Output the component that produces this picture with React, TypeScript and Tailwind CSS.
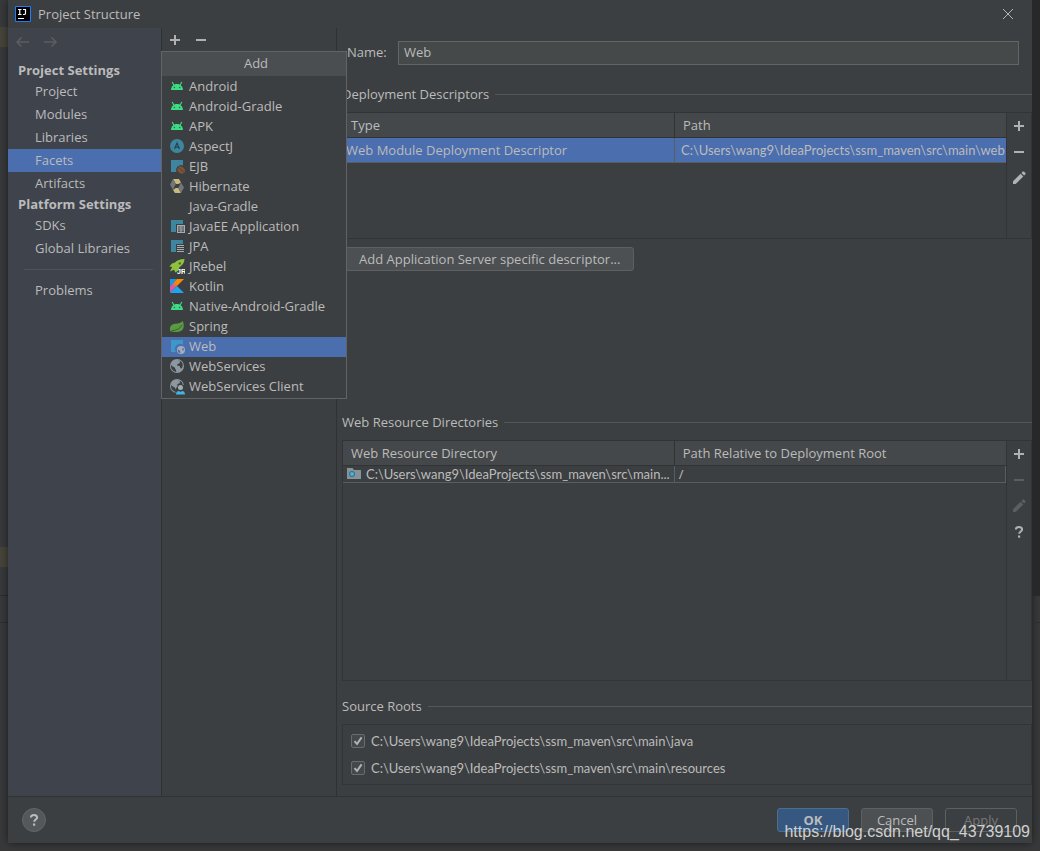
import { useState } from "react";
import type { ReactNode } from "react";

const sections = [
    { title: "Project Settings", items: ["Project", "Modules", "Libraries", "Facets", "Artifacts"] },
    { title: "Platform Settings", items: ["SDKs", "Global Libraries"] },
];

const facets = [
    { name: "Android", icon: "android" },
    { name: "Android-Gradle", icon: "android" },
    { name: "APK", icon: "android" },
    { name: "AspectJ", icon: "aspectj" },
    { name: "EJB", icon: "ejb" },
    { name: "Hibernate", icon: "hibernate" },
    { name: "Java-Gradle", icon: "none" },
    { name: "JavaEE Application", icon: "javaee" },
    { name: "JPA", icon: "jpa" },
    { name: "JRebel", icon: "jrebel" },
    { name: "Kotlin", icon: "kotlin" },
    { name: "Native-Android-Gradle", icon: "android" },
    { name: "Spring", icon: "spring" },
    { name: "Web", icon: "web" },
    { name: "WebServices", icon: "globe" },
    { name: "WebServices Client", icon: "client" },
];

function Globe() {
    return (
        <>
            <circle cx="8" cy="7" r="7" fill="#8c979f" />
            <path d="M2.2 5.8C3 7.8 6 8 6.2 9.4 6.4 10.6 7.4 10.8 7.2 13 3.6 12.4 1.4 9.4 2.2 5.8Z M8.6 1.4 11.2 2.4 10.6 4.2 8.6 5 8 6.6 10.6 7 11.4 9 12.8 9.4C14.4 6.6 14 3.4 11.2 2Z" fill="#3c3f41" />
        </>
    );
}

function FacetIcon({ name }: { name: string }) {
    let shape: ReactNode = null;

    if (name === "android") {
        shape = (
            <>
                <path d="M2 11C2.2 7.600 4.400 5 8 5s5.800 2.600 6 6Z" fill="#3ddc84" />
                <path d="M3.200 3 5 6.200M12.800 3 11 6.200" stroke="#3ddc84" strokeWidth="1.100" />
                <circle cx="5.400" cy="8.500" r=".8" fill="#2c6b48" />
                <circle cx="10.600" cy="8.500" r=".8" fill="#2c6b48" />
            </>
        );
    } else if (name === "aspectj") {
        shape = (
            <>
                <circle cx="8" cy="7" r="7" fill="#3e86a0" />
                <path d="M5.5 10 8 4l2.5 6M6.4 8.2h3.2" fill="none" stroke="#27434f" strokeWidth="1.2" />
            </>
        );
    } else if (name === "ejb") {
        shape = (
            <>
                <path d="M2 1h12v5.5A5 5 0 0 0 7.5 13H2Z" fill="#3e86a0" />
                <ellipse cx="12.2" cy="11" rx="4" ry="3.2" transform="rotate(40 12.2 11)" fill="#7d5534" />
                <path d="M9.6 9c1.6.2 1.6 1.6 2.8 2s1.2 1.6 2.6 2" fill="none" stroke="#3c3f41" strokeWidth=".9" />
            </>
        );
    } else if (name === "hibernate") {
        shape = (
            <>
                <path d="M4 0h6l2 3.600L9.500 5H6.8Z" fill="#c9b87c" />
                <path d="M4 0 6.8 5 5 8.6 4 11 1 5.5Z" fill="#737679" />
                <path d="M4 11l2.600-2h2.800L12 14H6Z" fill="#c9b87c" />
                <path d="M12 3.4 15 8.6 12 14 9.4 8.8Z" fill="#737679" />
            </>
        );
    } else if (name === "javaee") {
        shape = (
            <>
                <path d="M2 1h12v4H7v8H2Z" fill="#3e86a0" />
                <path d="M8 6h8v8H8Z" fill="#a5adb3" />
                <path d="M9 7.5h2.5v1H9zM12.5 7.5H15v1h-2.5zM9 9.5h2.5v1H9zM12.5 9.5H15v1h-2.5zM9 11.5h2.5v1.2H9zM12.5 11.5H15v1.2h-2.5z" fill="#3c3f41" />
            </>
        );
    } else if (name === "jpa") {
        shape = (
            <>
                <path d="M2 1h12v4H7v8H2Z" fill="#3e86a0" />
                <path d="M8 6.5h7M8 8.5h7M8 10.5h7M8 12.5h7" stroke="#a5adb3" strokeWidth="1" />
            </>
        );
    } else if (name === "jrebel") {
        shape = (
            <>
                <path d="M15.500 0C11 0 8 1.400 6 3.600L3 4.600.4 7.600l2.800.4L1 12.400 5 10.800l1.400 2.800 3-2.200.8-3C13.200 6.400 15.400 4 15.500 0Z" fill="#8fc13e" />
                <circle cx="10.800" cy="4.400" r="1.200" fill="#4c6a2c" />
                <text x="8" y="15" fontSize="7" fontWeight="700" fill="#fff" fontFamily="Liberation Sans, sans-serif">JR</text>
            </>
        );
    } else if (name === "kotlin") {
        shape = (
            <>
                <defs>
                    <linearGradient id="kt" x1="0" y1="1" x2="1" y2="0">
                        <stop offset="0" stopColor="#c757bc" />
                        <stop offset=".35" stopColor="#d0609a" />
                        <stop offset=".6" stopColor="#f88909" />
                        <stop offset="1" stopColor="#ff8900" />
                    </linearGradient>
                </defs>
                <path d="M1 0h7L1 7.500Z" fill="#0f9be8" />
                <path d="M8 0h7L1 14V7.300Z" fill="url(#kt)" />
                <path d="M1 14 8 7l7 7Z" fill="#1fa5ef" />
            </>
        );
    } else if (name === "spring") {
        shape = (
            <>
                <path d="M13.800 2C15.800 7 15 12.600 8.500 13 5 13.200 2.800 12.800 1.200 12 .4 8 2 5.400 6 4.800c3.600-.5 6-.8 7.800-2.800Z" fill="#5a9a41" />
                <path d="M2.500 11.800C7 11.600 11 9.800 13 6" fill="none" stroke="#3c5c36" strokeWidth="1" />
            </>
        );
    } else if (name === "web") {
        shape = (
            <>
                <path d="M2 1h12v5A5 5 0 0 0 7 13H2Z" fill="#3f97c9" />
                <circle cx="12" cy="11" r="4" fill="#a3adb8" />
                <path d="M9 10.300c1 1 2.200 1 2.200 2.200v1.800C9.200 13.800 8.600 12 9 10.300Z M12.400 7.800l1.800 1-1.200 1.600 1.400 1.400c1-1.200.8-3-2-4Z" fill="#4b6eaf" />
            </>
        );
    } else if (name === "globe") {
        shape = <Globe />;
    } else if (name === "client") {
        shape = (
            <>
                <Globe />
                <path d="M6.500 15.500V10l3-4H16v9.500Z" fill="#3c3f41" />
                <circle cx="11.500" cy="8.600" r="2.500" fill="#a5adb3" />
                <path d="M7 15.500c0-2.400 1.400-3.500 3-3.500l1.500 1 1.500-1c1.600 0 3 1.100 3 3.500Z" fill="#40b6e0" />
            </>
        );
    }

    return (
        <svg className="mt-0.5 h-4 w-4 shrink-0" viewBox="0 0 16 16" aria-hidden="true">
            {shape}
        </svg>
    );
}

function ToolIcon({ name }: { name: string }) {
    return (
        <svg className="h-4 w-4" viewBox="0 0 16 16" fill="currentColor" aria-hidden="true">
            {name === "Add" && <path d="M7 3h2v4h4v2H9v4H7V9H3V7h4z" />}
            {name === "Remove" && <path d="M3 7h10v2H3z" />}
            {name === "Edit" && <path d="M2 11.300 9.600 3.700l2.700 2.700L4.700 14H2Z M10.400 2.900l1.100-1.100c.5-.5 1.200-.5 1.700 0l1 1c.5.5.5 1.200 0 1.700l-1.100 1.100Z" />}
            {name === "Help" && (
                <>
                    <path d="M4.900 5.600C4.900 3.600 6.200 2.900 8 2.900s3.100.9 3.100 2.500c0 2-2.900 2.200-2.900 4.400" fill="none" stroke="currentColor" strokeWidth="2" />
                    <path d="M7 11.500h2.200v2.200H7z" />
                </>
            )}
        </svg>
    );
}

function ToolButton({ name, size = "h-[26px] w-6", disabled = false }: { name: string; size?: string; disabled?: boolean }) {
    return (
        <button
            aria-label={name}
            disabled={disabled}
            className={`flex ${size} items-center justify-center text-[#afb1b3] disabled:text-[#5c5f61]`}
        >
            <ToolIcon name={name} />
        </button>
    );
}

// Section title followed by a thin rule
function GroupTitle({ children }: { children: ReactNode }) {
    return (
        <h2 className="flex h-5 items-center gap-1.5">
            <span>{children}</span>
            <span className="h-px flex-1 bg-[#555859]" />
        </h2>
    );
}

function HeadRow({ columns }: { columns: string[] }) {
    return (
        <thead>
            <tr className="h-6 border-b border-[#313335] bg-[#45484a]">
                <th className="w-1/2 border-r border-[#313335] px-2 text-left font-normal">{columns[0]}</th>
                <th className="px-2 text-left font-normal">{columns[1]}</th>
            </tr>
        </thead>
    );
}

const footerButton = "h-6 w-[72px] rounded-[3px] border";
const pathText = "whitespace-nowrap font-['Lato','Open_Sans',sans-serif]";

export default function App() {
    const [page, setPage] = useState("Facets");
    const [facet, setFacet] = useState("Web");
    const [name, setName] = useState("Web");

    const pageLink = (item: string) => (
        <button
            key={item}
            onClick={() => setPage(item)}
            className={`block h-[23px] w-full pb-0.5 pl-[27px] text-left ${page === item ? "bg-[#4b6eaf]" : ""}`}
        >
            {item}
        </button>
    );

    return (
        <div className="flex min-h-screen bg-[#37393a] font-['Open_Sans',sans-serif] text-[13px] leading-5 text-[#bbbbbb]">
            {/* Editor showing on the left of the dialog */}
            <div className="flex w-2 shrink-0 flex-col">
                <div className="h-[27px]" />
                <div className="h-5 bg-[#47443a]" />
                <div className="h-[500px]" />
                <div className="h-5 bg-[#47443a]" />
                <div className="h-[29px] border-b border-[#2b2d2e]" />
                <div className="h-[27px] border-b border-[#2b2d2e]" />
            </div>

            <div className="mb-2 flex min-w-0 flex-1 flex-col bg-[#3c3f41] shadow-[0_0_8px_rgba(0,0,0,0.5)]">
                {/* Title bar */}
                <header className="flex h-7 shrink-0 items-center pl-[7px] pr-4">
                    <svg className="h-4 w-4" viewBox="0 0 16 16" aria-hidden="true">
                        <path d="M.5.5h15v15H.5z" fill="#000" stroke="#1a80f5" />
                        <path d="M3 3.500h3.500M4.750 3.500v5M3 8.500h3.500M8 3.500h3M10.500 3.500v3.700q0 1.300-1.300 1.300H8M3 12.500h6" fill="none" stroke="#fff" strokeWidth="1.200" />
                    </svg>
                    <h1 className="flex-1 pl-[7px]">Project Structure</h1>
                    <button aria-label="Close" className="flex h-4 w-4 items-center justify-center">
                        <svg className="h-3 w-3" viewBox="0 0 12 12" aria-hidden="true">
                            <path d="M1 1l10 10M11 1 1 11" stroke="#b5b5b5" strokeWidth="1" />
                        </svg>
                    </button>
                </header>

                <div className="flex flex-1">
                    {/* Sidebar */}
                    <nav className="w-[154px] shrink-0 border-r border-[#2f3234] bg-[#3f434c]">
                        <div className="flex h-[33px] gap-[11px] pl-[7px] pt-1.5 text-[#5b5d60]">
                            <button aria-label="Back" disabled className="h-4 w-4">
                                <svg viewBox="0 0 16 16" fill="none" stroke="currentColor" strokeWidth="1.600" aria-hidden="true">
                                    <path d="M14 8H2M6.500 3.500 2 8l4.500 4.500" />
                                </svg>
                            </button>
                            <button aria-label="Forward" disabled className="h-4 w-4">
                                <svg viewBox="0 0 16 16" fill="none" stroke="currentColor" strokeWidth="1.600" aria-hidden="true">
                                    <path d="M2 8h12M9.500 3.500 14 8l-4.500 4.500" />
                                </svg>
                            </button>
                        </div>
                        {sections.map((section) => (
                            <div key={section.title}>
                                <h2 className="h-[19px] pl-2.5 font-bold leading-[18px]">{section.title}</h2>
                                {section.items.map(pageLink)}
                            </div>
                        ))}
                        <div className="my-[9px] ml-4 mr-2 h-px bg-[#4f5257]" />
                        {pageLink("Problems")}
                    </nav>

                    {/* Facet list with the open "Add" menu */}
                    <div className="relative w-[175px] shrink-0 border-r border-[#2f3234]">
                        <div className="flex">
                            <ToolButton name="Add" size="h-6 w-[26px]" />
                            <ToolButton name="Remove" size="h-6 w-[26px]" />
                        </div>
                        <div className="absolute -left-px top-[23px] z-10 w-[186px] border border-[#616365] bg-[#3c3f41] pb-px">
                            <h2 className="mb-px h-6 bg-[#4b4e51] pl-1 text-center leading-[22px]">Add</h2>
                            {facets.map((item) => (
                                <button
                                    key={item.name}
                                    onClick={() => setFacet(item.name)}
                                    className={`flex h-5 w-full items-start gap-1 pl-[7px] leading-[18px] ${facet === item.name ? "bg-[#4b6eaf]" : ""}`}
                                >
                                    <FacetIcon name={item.icon} />
                                    <span>{item.name}</span>
                                </button>
                            ))}
                        </div>
                    </div>

                    {/* Facet settings */}
                    <main className="flex min-w-0 flex-1 flex-col pb-[11px] pl-[5px] pt-[13px]">
                        <div className="flex items-center pl-[5px] pr-[13px]">
                            <label htmlFor="name" className="w-[51px] pb-0.5">Name:</label>
                            <input
                                id="name"
                                value={name}
                                onChange={(e) => setName(e.target.value)}
                                className="h-6 min-w-0 flex-1 border border-[#646464] bg-[#45494a] px-[5px] pb-0.5 outline-none"
                            />
                        </div>

                        <div className="mt-[19px]">
                            <GroupTitle>Deployment Descriptors</GroupTitle>
                        </div>
                        <div className="mt-2 flex h-[127px] border border-[#323436]">
                            <div className="min-w-0 flex-1">
                                <table className="w-full table-fixed border-collapse">
                                    <HeadRow columns={["Type", "Path"]} />
                                    <tbody>
                                        <tr className="h-[25px] border-b border-[#5a5d5f] bg-[#4b6eaf]">
                                            <td className="whitespace-nowrap border-r border-[#5a5d5f] pl-[3px]">Web Module Deployment Descriptor</td>
                                            <td className={`${pathText} pl-1.5`}>C:\Users\wang9\IdeaProjects\ssm_maven\src\main\web</td>
                                        </tr>
                                    </tbody>
                                </table>
                            </div>
                            <div className="w-[25px] border-l border-[#323436]">
                                <ToolButton name="Add" />
                                <ToolButton name="Remove" />
                                <ToolButton name="Edit" />
                            </div>
                        </div>
                        <button className="ml-[3px] mt-2 h-6 self-start rounded-[3px] border border-[#5e6060] bg-[#4c5052] px-[13px] leading-5">
                            Add Application Server specific descriptor...
                        </button>

                        <div className="mt-[141px]">
                            <GroupTitle>Web Resource Directories</GroupTitle>
                        </div>
                        <div className="mt-2 flex min-h-[160px] flex-1 border border-[#323436]">
                            <div className="min-w-0 flex-1">
                                <table className="w-full table-fixed border-collapse">
                                    <HeadRow columns={["Web Resource Directory", "Path Relative to Deployment Root"]} />
                                    <tbody>
                                        <tr className="h-[17px] border-b border-r border-[#5a5d5f] leading-4">
                                            <td className="border-r border-[#5a5d5f] pl-[3px]">
                                                <div className="flex items-center gap-1">
                                                    <svg className="h-4 w-4 shrink-0" viewBox="0 0 16 16" aria-hidden="true">
                                                        <path d="M1 2h5.500l1.500 2h7v9H1Z" fill="#87939a" />
                                                        <circle cx="6" cy="8" r="3" fill="#3c6b7f" />
                                                        <circle cx="6" cy="8" r="2" fill="#40b6e0" />
                                                    </svg>
                                                    <span className={pathText}>C:\Users\wang9\IdeaProjects\ssm_maven\src\main...</span>
                                                </div>
                                            </td>
                                            <td className="pl-1">/</td>
                                        </tr>
                                    </tbody>
                                </table>
                            </div>
                            <div className="w-[25px] border-l border-[#323436]">
                                <ToolButton name="Add" />
                                <ToolButton name="Remove" disabled />
                                <ToolButton name="Edit" disabled />
                                <ToolButton name="Help" />
                            </div>
                        </div>

                        <div className="mt-[15px]">
                            <GroupTitle>Source Roots</GroupTitle>
                        </div>
                        <div className="mt-2 flex flex-col gap-[7px] border border-[#323436] py-1.5 pl-2">
                            {["java", "resources"].map((dir) => (
                                <label key={dir} className="flex h-5 items-center gap-1.5">
                                    <span className="relative flex h-3.5 w-3.5">
                                        <input
                                            type="checkbox"
                                            defaultChecked
                                            className="peer h-3.5 w-3.5 appearance-none rounded-[2px] border border-[#6b6b6b] bg-[#43494a]"
                                        />
                                        <svg className="pointer-events-none absolute inset-0 hidden peer-checked:block" viewBox="0 0 14 14" aria-hidden="true">
                                            <path d="M3.500 7.200 6 10l4.600-6.600" fill="none" stroke="#b0b2b3" strokeWidth="2" />
                                        </svg>
                                    </span>
                                    <span className={pathText}>{"C:\\Users\\wang9\\IdeaProjects\\ssm_maven\\src\\main\\" + dir}</span>
                                </label>
                            ))}
                        </div>
                    </main>
                </div>

                {/* Bottom buttons */}
                <footer className="relative flex h-[47px] shrink-0 items-center gap-3 border-t border-[#313335] pl-[14px] pr-[15px]">
                    <button aria-label="Help" className="mr-auto flex h-6 w-6 items-center justify-center rounded-full border border-[#636668] bg-[#54585a] text-[#bbbbbb]">
                        <ToolIcon name="Help" />
                    </button>
                    <button className={`${footerButton} border-[#4c708c] bg-[#365880] font-bold`}>OK</button>
                    <button className={`${footerButton} border-[#5e6060] bg-[#4c5052]`}>Cancel</button>
                    <button disabled className={`${footerButton} border-[#5e6060] text-[#777777]`}>Apply</button>
                    <span className="pointer-events-none absolute bottom-px right-0.5 font-['Liberation_Sans',Arial,sans-serif] text-base leading-5 text-[#d0d0d0]">
                        https://blog.csdn.net/qq_43739109
                    </span>
                </footer>
            </div>

            {/* Editor showing on the right */}
            <div className="flex w-2 shrink-0 flex-col">
                <div className="h-[596px] bg-[#272829]" />
                <div className="h-[27px] border-b border-[#2b2d2e]" />
            </div>
        </div>
    );
}
